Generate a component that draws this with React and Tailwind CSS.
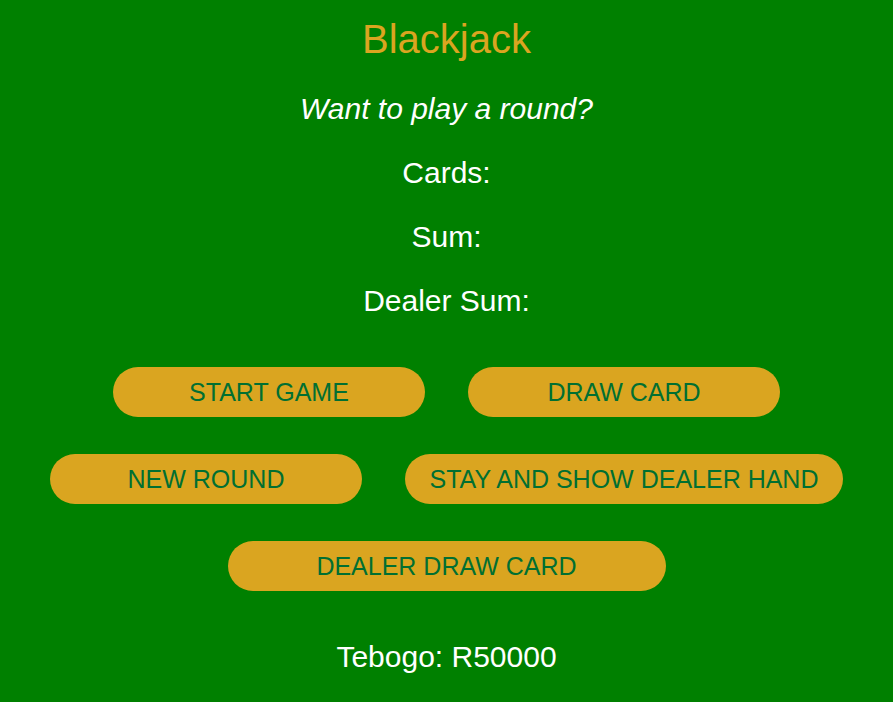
const buttonClass =
  "h-[50px] rounded-full bg-[#daa520] text-[25px] leading-7 text-[#016f32] whitespace-nowrap";

function ActionButton({ wide = false, children }) {
  return (
    <button type="button" className={`${buttonClass} ${wide ? "w-[438px]" : "w-[312px]"}`}>
      {children}
    </button>
  );
}

export default function App() {
  return (
    <main className="min-h-screen bg-[#008000] pt-4 text-center font-['Liberation_Sans',Arial,sans-serif] text-[30px] leading-[34px] text-white">
      <h1 className="text-[40px] leading-[46px] text-[#daa520]">Blackjack</h1>
      <div className="mt-[30px] flex flex-col gap-[30px]">
        <p className="italic">Want to play a round?</p>
        <p>Cards:</p>
        <p>Sum:</p>
        <p>Dealer Sum:</p>
      </div>
      <div className="mt-[49px] flex flex-wrap justify-center gap-x-[43px] gap-y-[37px] px-8">
        <ActionButton>START GAME</ActionButton>
        <ActionButton>DRAW CARD</ActionButton>
        <ActionButton>NEW ROUND</ActionButton>
        <ActionButton wide>STAY AND SHOW DEALER HAND</ActionButton>
        <ActionButton wide>DEALER DRAW CARD</ActionButton>
      </div>
      <p className="mt-[49px]">Tebogo: R50000</p>
    </main>
  );
}
